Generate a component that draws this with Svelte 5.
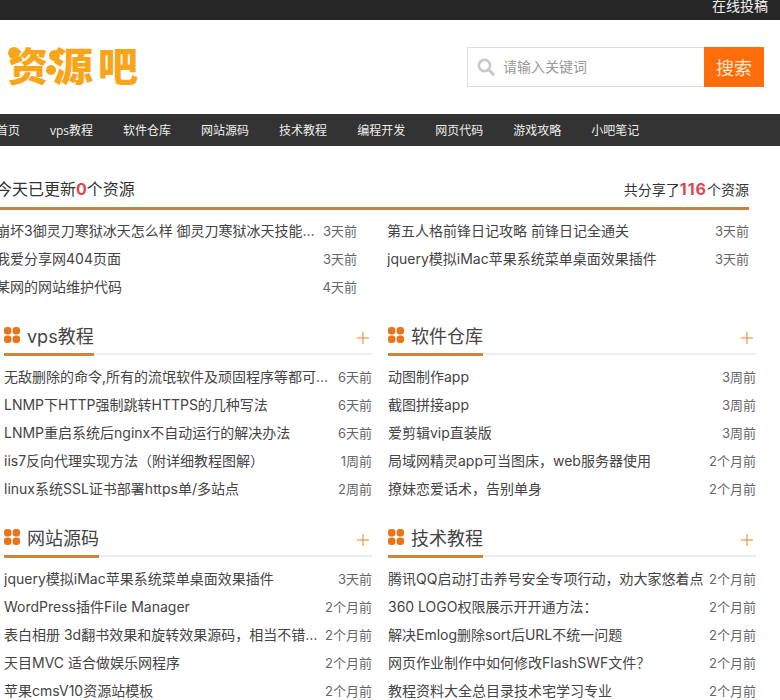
<script>
  const top = [
    [{ t: '崩坏3御灵刀寒狱冰天怎么样 御灵刀寒狱冰天技能及效果全解析', d: '3天前' }, { t: '我爱分享网404页面', d: '3天前' }, { t: '某网的网站维护代码', d: '4天前' }],
    [{ t: '第五人格前锋日记攻略 前锋日记全通关', d: '3天前' }, { t: 'jquery模拟iMac苹果系统菜单桌面效果插件', d: '3天前' }]
  ];
  const sections = [
    { name: 'vps教程', items: [['无敌删除的命令,所有的流氓软件及顽固程序等都可以删除', '6天前'], ['LNMP下HTTP强制跳转HTTPS的几种写法', '6天前'], ['LNMP重启系统后nginx不自动运行的解决办法', '6天前'], ['iis7反向代理实现方法（附详细教程图解）', '1周前'], ['linux系统SSL证书部署https单/多站点', '2周前']] },
    { name: '软件仓库', items: [['动图制作app', '3周前'], ['截图拼接app', '3周前'], ['爱剪辑vip直装版', '3周前'], ['局域网精灵app可当图床，web服务器使用', '2个月前'], ['撩妹恋爱话术，告别单身', '2个月前']] },
    { name: '网站源码', items: [['jquery模拟iMac苹果系统菜单桌面效果插件', '3天前'], ['WordPress插件File Manager', '2个月前'], ['表白相册 3d翻书效果和旋转效果源码，相当不错的源码下载', '2个月前'], ['天目MVC 适合做娱乐网程序', '2个月前'], ['苹果cmsV10资源站模板', '2个月前']] },
    { name: '技术教程', items: [['腾讯QQ启动打击养号安全专项行动，劝大家悠着点', '2个月前'], ['360 LOGO权限展示开开通方法：', '2个月前'], ['解决Emlog删除sort后URL不统一问题', '2个月前'], ['网页作业制作中如何修改FlashSWF文件？', '2个月前'], ['教程资料大全总目录技术宅学习专业', '2个月前']] }
  ];
  const nav = ['首页', 'vps教程', '软件仓库', '网站源码', '技术教程', '编程开发', '网页代码', '游戏攻略', '小吧笔记'];
</script>

<div class="page">
  <div class="topbar"><a>在线投稿</a></div>
  <header class="head">
    <div class="logo">
      <span>资</span><span>源</span><span>吧</span>
      <i class="dot a"></i><i class="dot b"></i><i class="dot c"></i>
    </div>
    <div class="search">
      <div class="field">
        <svg viewBox="0 0 18 18" width="18" height="18"><circle cx="7.5" cy="7.5" r="5.6" fill="none" stroke="#c9c9c9" stroke-width="2.6"/><path d="M11.8 11.8 16.2 16.2" stroke="#c9c9c9" stroke-width="3" stroke-linecap="round"/></svg>
        <span class="ph">请输入关键词</span>
      </div>
      <div class="btn">搜索</div>
    </div>
  </header>
  <nav class="nav">{#each nav as n}<a>{n}</a>{/each}</nav>

  <div class="today">
    <div class="today-head">
      <div>今天已更新<b>0</b>个资源</div>
      <div class="total">共分享了<b>116</b>个资源</div>
    </div>
    <div class="today-cols">
      {#each top as col}
        <ul>{#each col as r}<li><span class="t">{r.t}</span><span class="d">{r.d}</span></li>{/each}</ul>
      {/each}
    </div>
  </div>

  <div class="grid">
    {#each sections as s}
      <section>
        <div class="sec-head">
          <h3>
            <svg viewBox="0 0 16 16" width="16" height="16"><g fill="#e8751a"><rect x="0" y="0" width="7.4" height="7.4" rx="3"/><rect x="8.6" y="0" width="7.4" height="7.4" rx="3"/><rect x="0" y="8.6" width="7.4" height="7.4" rx="3"/><rect x="8.6" y="8.6" width="7.4" height="7.4" rx="3"/></g></svg>
            {s.name}
          </h3>
          <svg class="plus" viewBox="0 0 12 12" width="12" height="12"><path d="M6 0V12M0 6H12" stroke="#e8812a" stroke-width="1"/></svg>
        </div>
        <ul>{#each s.items as r}<li><span class="t">{r[0]}</span><span class="d">{r[1]}</span></li>{/each}</ul>
      </section>
    {/each}
  </div>
</div>

<style>
  :global(body) { margin: 0; background: #fff; overflow: hidden; }
  .page { height: 700px; overflow: hidden; font-family: "Inter", "Noto Sans CJK SC", sans-serif; font-size: 14px; color: #444; }
  .topbar { height: 20px; background: #262626; display: flex; justify-content: flex-end; padding-right: 12px; }
  .topbar a { color: #eee; font-size: 14px; line-height: 12px; }
  .head { height: 94px; display: flex; align-items: center; justify-content: space-between; padding: 0 16px 0 8px; box-sizing: border-box; }
  .logo { position: relative; display: flex; gap: 5px; font-family: "Noto Sans CJK SC", sans-serif; font-weight: 900; font-size: 40px; line-height: 44px; color: #f9a51a; margin-top: -6px; }
  .dot { position: absolute; border-radius: 50%; background: #f9a51a; }
  .dot.a { left: 0; top: 5px; width: 12px; height: 12px; }
  .dot.b { left: 41px; top: 8px; width: 11px; height: 11px; }
  .dot.c { left: 38px; top: 23px; width: 10px; height: 10px; }
  .search { display: flex; height: 40px; }
  .field { width: 237px; box-sizing: border-box; border: 1px solid #ddd; border-right: 0; display: flex; align-items: center; padding-left: 9px; gap: 8px; color: #999; }
  .ph { margin-bottom: 2px; }
  .btn { width: 60px; background: #ff6c0a; color: #ffe9d2; font-size: 18px; display: flex; align-items: center; justify-content: center; }
  .nav { height: 32px; background: #333; display: flex; margin-left: -19px; align-items: center; font-family: "Open Sans", "Noto Sans CJK SC", sans-serif; font-size: 12px; color: #eee; }
  .nav a { padding: 0 15px; white-space: nowrap; }
  .today { width: 753px; margin: 28px 0 0 -4px; }
  .today-head { display: flex; justify-content: space-between; height: 33px; border-bottom: 3px solid #c8843f; font-size: 16px; line-height: 30px; color: #333; }
  .total { font-size: 14px; }
  b { color: #e2454f; font-weight: 700; }
  .today-head b { font-size: 16px; }
  .total b { letter-spacing: 1px; }
  .today-cols { display: grid; grid-template-columns: 361px 362px; gap: 30px; margin-top: 7px; }
  ul { list-style: none; margin: 0; padding: 0; }
  li { display: flex; justify-content: space-between; gap: 4px; height: 28px; line-height: 28px; }
  .t { flex: 1; min-width: 0; overflow: hidden; white-space: nowrap; text-overflow: ellipsis; }
  .d { font-size: 13px; color: #666; flex: none; }
  .grid { display: grid; grid-template-columns: 368px 368px; gap: 18px 16px; margin: 18px 0 0 4px; }
  .sec-head { height: 34px; display: flex; justify-content: space-between; align-items: center; border-bottom: 2px solid #eee; position: relative; margin-bottom: 8px; }
  h3 { margin: 0; font-size: 18px; font-weight: 400; color: #444; height: 34px; line-height: 36px; display: flex; align-items: flex-start; gap: 7px; box-sizing: content-box; border-bottom: 3px solid #d0833b; margin-bottom: -3px; }
  h3 svg { margin-top: 8px; }
  .plus { margin: 3px 3px 0 0; }
</style>
